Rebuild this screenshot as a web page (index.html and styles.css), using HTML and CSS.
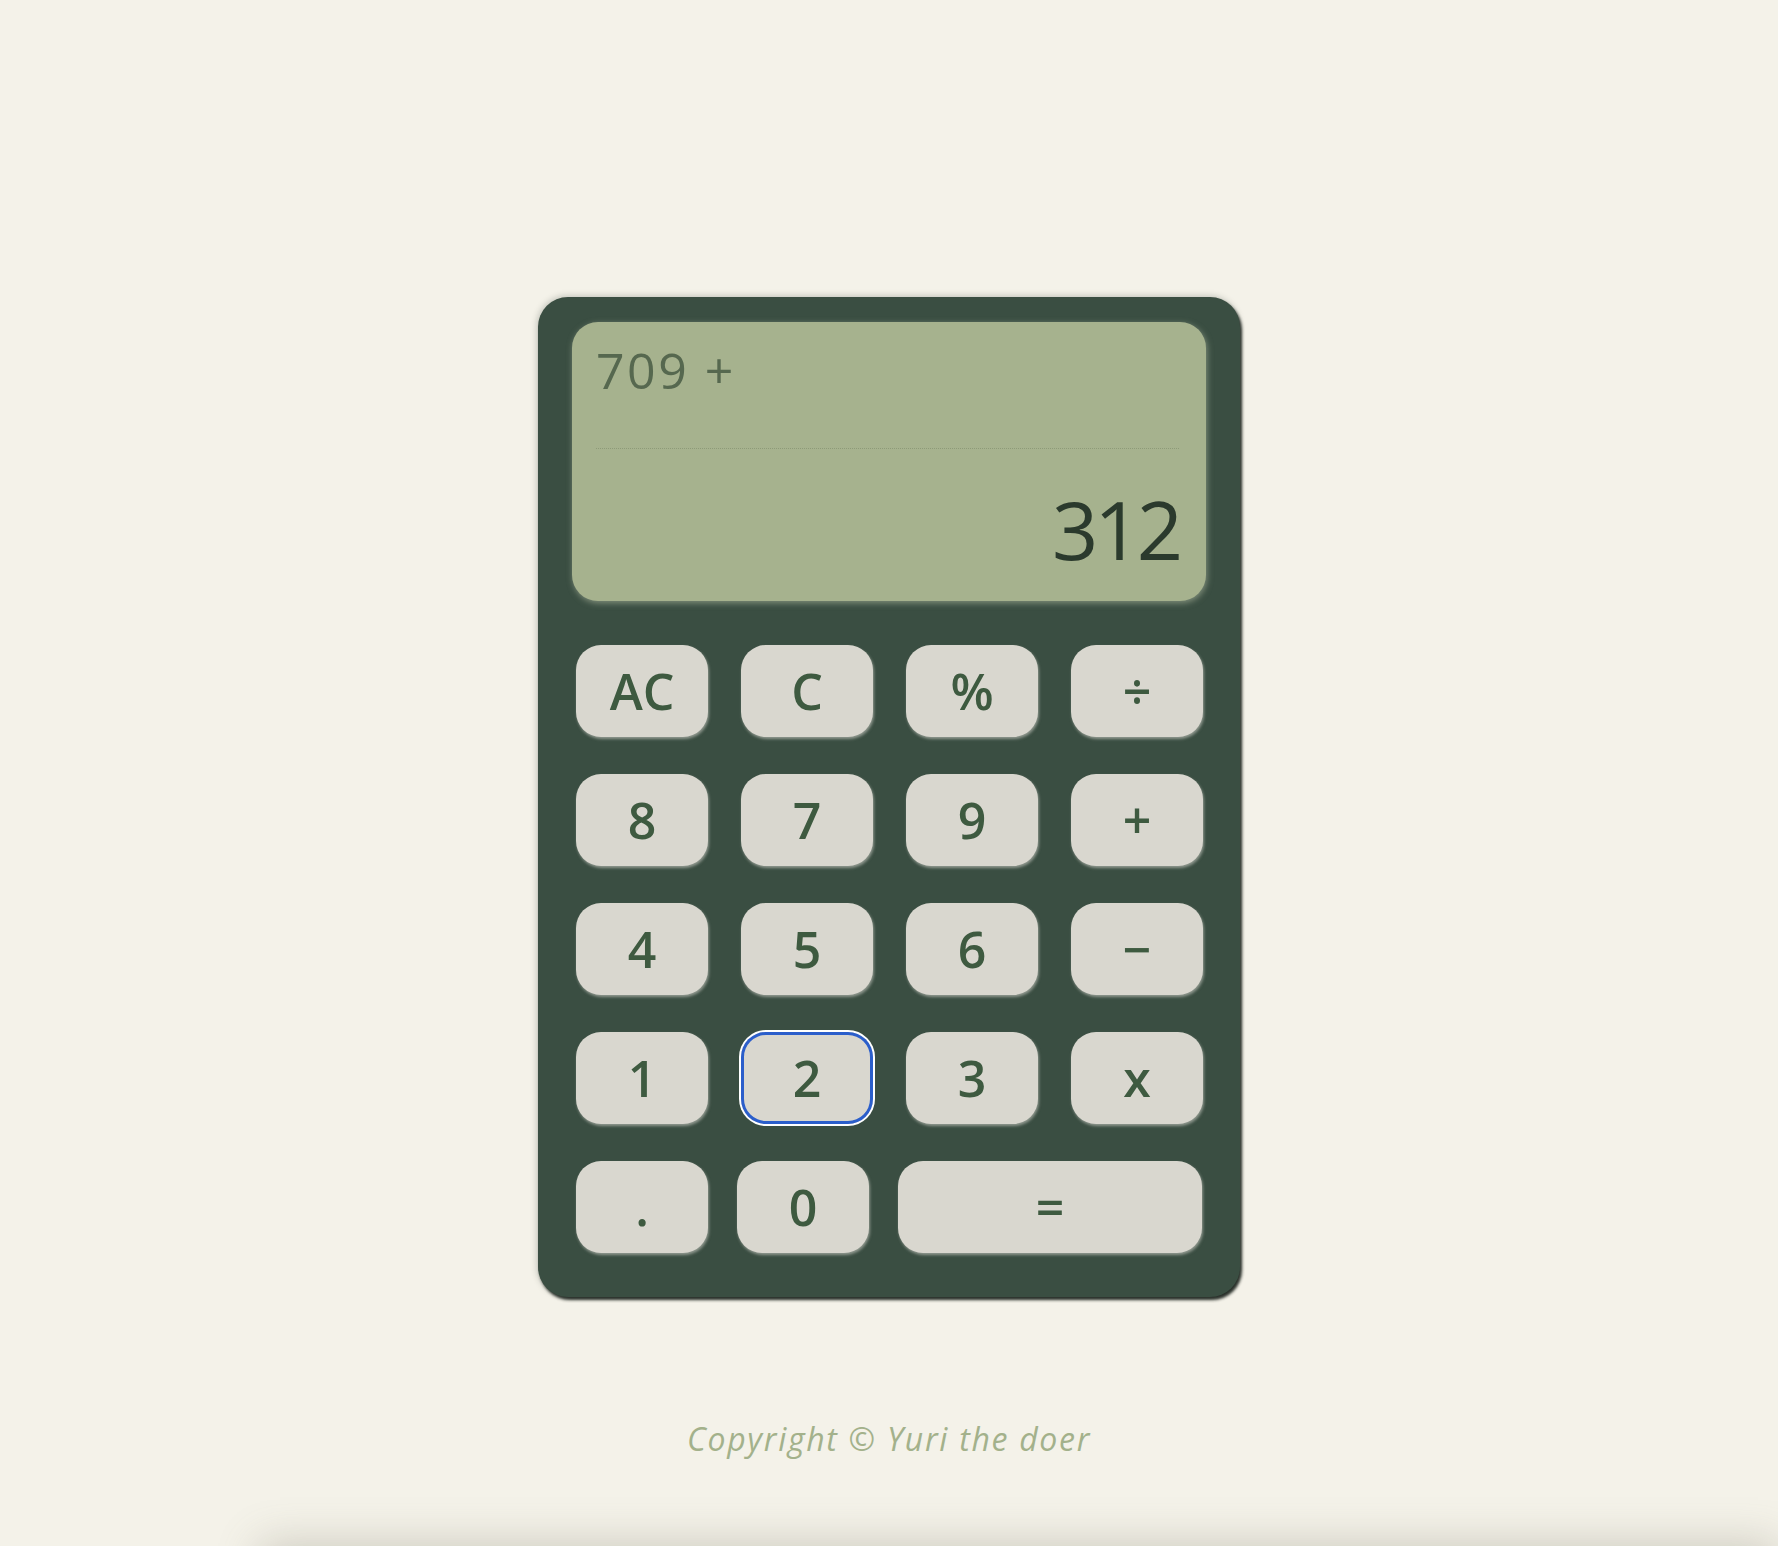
FILE: index.html
```html
<!DOCTYPE html>
<html lang="en">
<head>
<meta charset="utf-8">
<title>Calculator</title>
<link rel="stylesheet" href="styles.css">
</head>
<body>
<main class="page">
  <div class="calc">
    <div class="screen">
      <div class="prev">709 +</div>
      <div class="rule"></div>
      <div class="curr">312</div>
    </div>
    <div class="keys">
      <button class="key">AC</button>
      <button class="key">C</button>
      <button class="key">%</button>
      <button class="key">÷</button>
      <button class="key">8</button>
      <button class="key">7</button>
      <button class="key">9</button>
      <button class="key">+</button>
      <button class="key">4</button>
      <button class="key">5</button>
      <button class="key">6</button>
      <button class="key">−</button>
      <button class="key">1</button>
      <button class="key focused">2</button>
      <button class="key">3</button>
      <button class="key">x</button>
    </div>
    <div class="lastrow">
      <button class="key">.</button>
      <button class="key">0</button>
      <button class="key wide">=</button>
    </div>
  </div>
  <footer class="footer">Copyright © Yuri the doer</footer>
  <div class="floor"></div>
</main>
</body>
</html>
```

FILE: styles.css
```css
html, body {
  margin: 0;
  padding: 0;
}
body {
  background: #f4f2e9;
  font-family: "Open Sans", "Liberation Sans", sans-serif;
  overflow: hidden;
}
.page {
  display: flex;
  flex-direction: column;
  align-items: center;
  padding-top: 297px;
}
.calc {
  width: 702px;
  box-sizing: border-box;
  padding: 25px 34px 44px 34px;
  background: #3a4e42;
  border-radius: 30px;
  box-shadow: 2px 3px 3px rgba(20, 28, 22, 0.9), -1px -1px 6px rgba(40, 50, 44, 0.25);
}
.screen {
  height: 279px;
  box-sizing: border-box;
  background: #a6b28e;
  border-radius: 26px;
  padding: 20px 27px 0 24px;
  display: flex;
  flex-direction: column;
  box-shadow: 1px 2px 6px rgba(190, 198, 172, 0.55);
}
.prev {
  font-size: 50px;
  line-height: 56px;
  color: #56684f;
  letter-spacing: 2.5px;
}
.rule {
  margin-top: 50px;
  border-top: 1px dotted #8d9a78;
}
.curr {
  margin-top: 34px;
  text-align: right;
  font-size: 81px;
  line-height: 92px;
  color: #2b3a2d;
  letter-spacing: -4px;
}
.keys {
  margin: 44px 4px 0 4px;
  display: grid;
  grid-template-columns: repeat(4, 132px);
  column-gap: 33px;
  row-gap: 37px;
}
.lastrow {
  margin: 37px 4px 0 4px;
  display: flex;
  gap: 29px;
}
.key {
  width: 132px;
  height: 92px;
  border: none;
  border-radius: 25px;
  background: #d9d7cf;
  color: #3e5a40;
  font-family: "Open Sans", "Liberation Sans", sans-serif;
  font-weight: 600;
  font-size: 50px;
  line-height: 1;
  padding: 0;
  box-shadow: 1px 2px 3px rgba(217, 215, 207, 0.55);
  display: flex;
  align-items: center;
  justify-content: center;
}
.key.wide {
  flex: 1;
  width: auto;
}
.key.focused {
  box-shadow: inset 0 0 0 3px #2b5ecb, 0 0 0 2px #ffffff;
}
.footer {
  margin-top: 118px;
  font-style: italic;
  font-size: 32px;
  line-height: 48px;
  color: #a3b18b;
  letter-spacing: 1.7px;
}
.floor {
  margin-top: 86px;
  align-self: stretch;
  margin-left: 260px;
  height: 200px;
  background: #f4f2e9;
  box-shadow: 0 -6px 40px rgba(120, 115, 100, 0.3);
}
```
